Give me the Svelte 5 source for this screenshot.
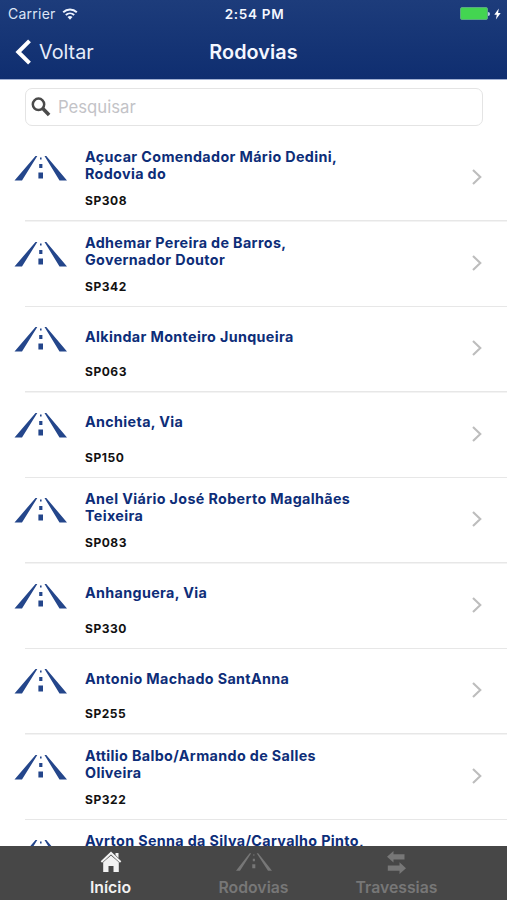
<script lang="ts">
    let search: string = "";
    let activeTab: string = "inicio";

    const roads = [
        { code: "SP308", name: "Açucar Comendador Mário Dedini, Rodovia do" },
        { code: "SP342", name: "Adhemar Pereira de Barros, Governador Doutor" },
        { code: "SP063", name: "Alkindar Monteiro Junqueira" },
        { code: "SP150", name: "Anchieta, Via" },
        { code: "SP083", name: "Anel Viário José Roberto Magalhães Teixeira" },
        { code: "SP330", name: "Anhanguera, Via" },
        { code: "SP255", name: "Antonio Machado SantAnna" },
        { code: "SP322", name: "Attilio Balbo/Armando de Salles Oliveira" },
        { code: "", name: "Ayrton Senna da Silva/Carvalho Pinto, Rodovia" },
    ];

    const tabs = [
        { id: "inicio", label: "Início" },
        { id: "rodovias", label: "Rodovias" },
        { id: "travessias", label: "Travessias" },
    ];

    $: visibleRoads = roads.filter((road) =>
        (road.name + " " + road.code).toLowerCase().includes(search.toLowerCase())
    );
</script>

<div class="screen">
    <header>
        <div class="status">
            <div class="carrier">
                <span>Carrier</span>
                <svg width="16" height="12" viewBox="0 0 16 12">
                    <g fill="none" stroke="#eef4ff" stroke-width="1.9">
                        <path d="M1.2 4.3C5 .6 11 .6 14.8 4.3" />
                        <path d="M3.8 7C6.2 4.8 9.8 4.8 12.2 7" />
                    </g>
                    <path d="M8 11.7 5.5 9C7 7.8 9 7.8 10.5 9Z" fill="#eef4ff" />
                </svg>
            </div>
            <span class="time">2:54 PM</span>
            <div class="power">
                <span class="battery"></span>
                <span class="tip"></span>
                <svg width="7" height="12" viewBox="0 0 7 12">
                    <path d="M4.8.5.3 6.7h2.5L1.9 11.5 6.7 5H4.1Z" fill="#fff" />
                </svg>
            </div>
        </div>
        <nav>
            <button class="back">
                <svg width="16" height="26" viewBox="0 0 16 26">
                    <path d="M14.5 1.8 3.3 13 14.5 24.2" fill="none" stroke="#fff" stroke-width="4" />
                </svg>
                <span>Voltar</span>
            </button>
            <h1>Rodovias</h1>
        </nav>
    </header>

    <label class="search">
        <svg width="20" height="20" viewBox="0 0 20 20">
            <circle cx="7.5" cy="7.3" r="5.7" fill="none" stroke="#4a4a4a" stroke-width="2.5" />
            <path d="M11.8 11.6 18.1 18" stroke="#4a4a4a" stroke-width="3.6" />
        </svg>
        <input type="text" placeholder="Pesquisar" bind:value={search}>
    </label>

    <!-- List of roads -->
    <main>
        {#each visibleRoads as road}
            <article>
                <svg class="road" width="54" height="26" viewBox="0 0 54 26">
                    <path d="M21.5 0h1.8L8 24.5H.5ZM30.5 0h1.8L53 24.5h-7.5ZM26 1.5h1.6v2H26ZM25.2 8h3.2v4h-3.2ZM24.4 16.5h4.6v6h-4.6Z" />
                </svg>
                <div class="info">
                    <h2>{road.name}</h2>
                    {#if road.code}
                        <p>{road.code}</p>
                    {/if}
                </div>
                <svg class="arrow" width="12" height="18" viewBox="0 0 12 18">
                    <path d="M2 2 9.3 9 2 16" fill="none" stroke="#bdbdbd" stroke-width="2.1" />
                </svg>
            </article>
        {/each}
    </main>

    <footer>
        {#each tabs as tab}
            <button class="tab" class:active={tab.id === activeTab} on:click={() => (activeTab = tab.id)}>
                <span class="icon">
                    {#if tab.id === "inicio"}
                        <svg width="22" height="22" viewBox="0 0 22 22">
                            <path d="M11 .5 21.3 10.3 20 11.8 11 3.6 2 11.8.7 10.3ZM15.5 2h3v5l-3-2.9Z" />
                            <path d="M11 4.4 18.8 11.3V21h-5.3v-6h-5v6H3.2v-9.7Z" />
                        </svg>
                    {:else if tab.id === "rodovias"}
                        <svg width="36" height="18" viewBox="0 0 54 26">
                            <path d="M20.5 0h2.3L6 26H0ZM31 0h2.3L54 26h-6ZM26 1.5h1.6v2H26ZM25.2 8h3.2v4h-3.2ZM24.4 16.5h4.6v6h-4.6Z" />
                        </svg>
                    {:else}
                        <svg width="19" height="23" viewBox="0 0 19 23">
                            <path d="M0 5.8 6.5 0v3.2h11v5.2h-11v3.2ZM19 17.2 12.5 11.3v3.3H.8v5.2h11.7V23Z" />
                        </svg>
                    {/if}
                </span>
                <span>{tab.label}</span>
            </button>
        {/each}
    </footer>
</div>

<style>
    .screen {
        display: flex;
        flex-direction: column;
        width: 507px;
        height: 900px;
        overflow: hidden;
        background-color: white;
        font-family: Inter, "Liberation Sans", sans-serif;
    }

    button {
        border: none;
        background: none;
        padding: 0;
        font-family: inherit;
    }

    h1, h2, p {
        margin: 0;
    }

    header {
        flex: none;
        height: 80px;
        box-sizing: border-box;
        border-bottom: 1px solid #a1b0d3;
        background: linear-gradient(#1d3c7b, #0f2e70);
        color: #f4f7ff;
    }

    .status {
        display: grid;
        grid-template-columns: 1fr auto 1fr;
        align-items: center;
        height: 27px;
        padding: 0 6px 0 8px;
        font-size: 14px;
    }

    .carrier {
        display: flex;
        align-items: center;
        gap: 6px;
        color: #dce5f6;
        letter-spacing: .25px;
    }

    .time {
        font-size: 13.5px;
        font-weight: 600;
        letter-spacing: .7px;
    }

    .power {
        display: flex;
        justify-content: flex-end;
        align-items: center;
    }

    .battery {
        width: 26px;
        height: 11px;
        border: 1px solid #59a982;
        border-radius: 2px;
        background-color: #43d551;
    }

    .tip {
        width: 2px;
        height: 4px;
        margin-right: 4px;
        border-radius: 0 2px 2px 0;
        background-color: #b9cbe7;
    }

    nav {
        display: grid;
        grid-template-columns: 1fr auto 1fr;
        align-items: center;
        height: 50px;
        padding: 0 15px;
    }

    .back {
        display: flex;
        align-items: center;
        gap: 8px;
        color: #e6edfb;
        font-size: 19.8px;
    }

    h1 {
        font-size: 19.8px;
        font-weight: 600;
        letter-spacing: .1px;
    }

    .search {
        display: flex;
        flex: none;
        align-items: center;
        gap: 7px;
        height: 38px;
        box-sizing: border-box;
        margin: 8px 24px 10px 25px;
        padding-left: 5px;
        border: 1px solid #e4e4e4;
        border-radius: 7px;
    }

    .search input {
        flex: 1;
        padding: 0;
        border: none;
        outline: none;
        background: none;
        color: #333;
        font-family: inherit;
        font-size: 16.7px;
    }

    .search input::placeholder {
        color: #c3c3c7;
    }

    main {
        flex: 1;
        min-height: 0;
        overflow: hidden;
    }

    article {
        display: flex;
        height: 85.5px;
        padding-left: 14px;
        background: linear-gradient(#e7e7e7, #e7e7e7) 25px bottom / 100% 1.5px no-repeat;
    }

    .road {
        flex: none;
        margin-top: 20px;
        fill: #24468b;
    }

    .info {
        width: 281px;
        margin-left: 17px;
    }

    h2 {
        display: flex;
        align-items: center;
        height: 58px;
        color: #0d2d78;
        font-size: 14.3px;
        font-weight: 700;
        line-height: 17px;
        letter-spacing: .37px;
    }

    p {
        padding-top: 2px;
        color: #111;
        font-size: 12px;
        font-weight: 700;
        line-height: 10px;
        letter-spacing: .55px;
    }

    .arrow {
        flex: none;
        margin: 32px 24px 0 auto;
    }

    footer {
        display: flex;
        flex: none;
        justify-content: center;
        height: 54px;
        background-color: #474747;
    }

    .tab {
        display: flex;
        flex-direction: column;
        align-items: center;
        width: 143px;
        color: #777;
        font-size: 15.8px;
        font-weight: 600;
        line-height: 20px;
    }

    .tab.active {
        color: #f2f2f2;
    }

    .icon {
        display: flex;
        align-items: center;
        height: 32px;
    }

    .icon svg {
        fill: currentColor;
    }
</style>
